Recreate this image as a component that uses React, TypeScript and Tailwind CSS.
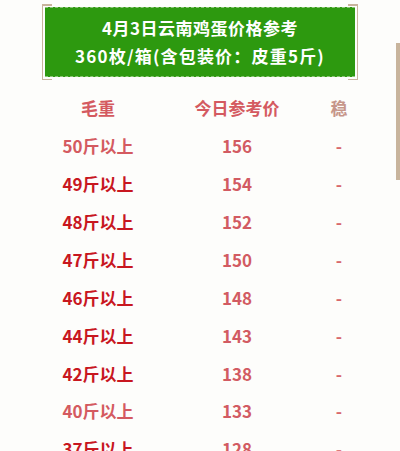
const rows = [
  { w: '50斤以上', p: 156, dark: false },
  { w: '49斤以上', p: 154, dark: true },
  { w: '48斤以上', p: 152, dark: true },
  { w: '47斤以上', p: 150, dark: true },
  { w: '46斤以上', p: 148, dark: true },
  { w: '44斤以上', p: 143, dark: true },
  { w: '42斤以上', p: 138, dark: true },
  { w: '40斤以上', p: 133, dark: false },
  { w: '37斤以上', p: 128, dark: true },
]

export default function App() {
  return (
    <div
      className="relative h-[451px] w-[400px] overflow-hidden bg-[#fdfdfb]"
      style={{ fontFamily: '"Noto Sans CJK SC", "Noto Sans", sans-serif' }}
    >
      {/* title box with tan corner frame */}
      <div className="pt-[4px]">
        <div className="relative mx-[42px] h-[76px] border-x-[1.5px] border-[#c8b49c] px-[2px] py-[3px]">
          <span className="absolute left-0 top-0 h-[1.5px] w-[9px] bg-[#c8b49c]" />
          <span className="absolute right-0 top-0 h-[1.5px] w-[9px] bg-[#c8b49c]" />
          <span className="absolute bottom-0 left-0 h-[1.5px] w-[9px] bg-[#c8b49c]" />
          <span className="absolute bottom-0 right-0 h-[1.5px] w-[9px] bg-[#c8b49c]" />
          <div className="flex h-full flex-col items-center justify-center border-y border-dashed border-[#8fc77a] bg-[#2d990f] text-[17px] font-bold leading-[28px] text-white">
            <div className="tracking-[0.5px]">4月3日云南鸡蛋价格参考</div>
            <div className="tracking-[1.2px]">360枚/箱(含包装价：皮重5斤)</div>
          </div>
        </div>
      </div>

      {/* price table */}
      <div className="mx-[30px] mt-[9px] w-[340px] text-[17px] font-bold">
        <div className="grid h-[38px] grid-cols-[136px_142px_62px] items-center text-center text-[#d45a60]">
          <div>毛重</div>
          <div>今日参考价</div>
          <div className="text-[#c6968a]">稳</div>
        </div>
        {rows.map((r) => (
          <div
            key={r.w}
            className="grid h-[37.9px] grid-cols-[136px_142px_62px] items-center text-center"
          >
            <div className={r.dark ? 'text-[#c8171f]' : 'text-[#d45a60]'}>{r.w}</div>
            <div className="text-[#d25b62]">{r.p}</div>
            <div className="text-[#d8686c]">-</div>
          </div>
        ))}
      </div>

      {/* scroll indicator */}
      <div className="absolute right-0 top-[43px] h-[137px] w-[4px] bg-[#c8b49c]" />
    </div>
  )
}
